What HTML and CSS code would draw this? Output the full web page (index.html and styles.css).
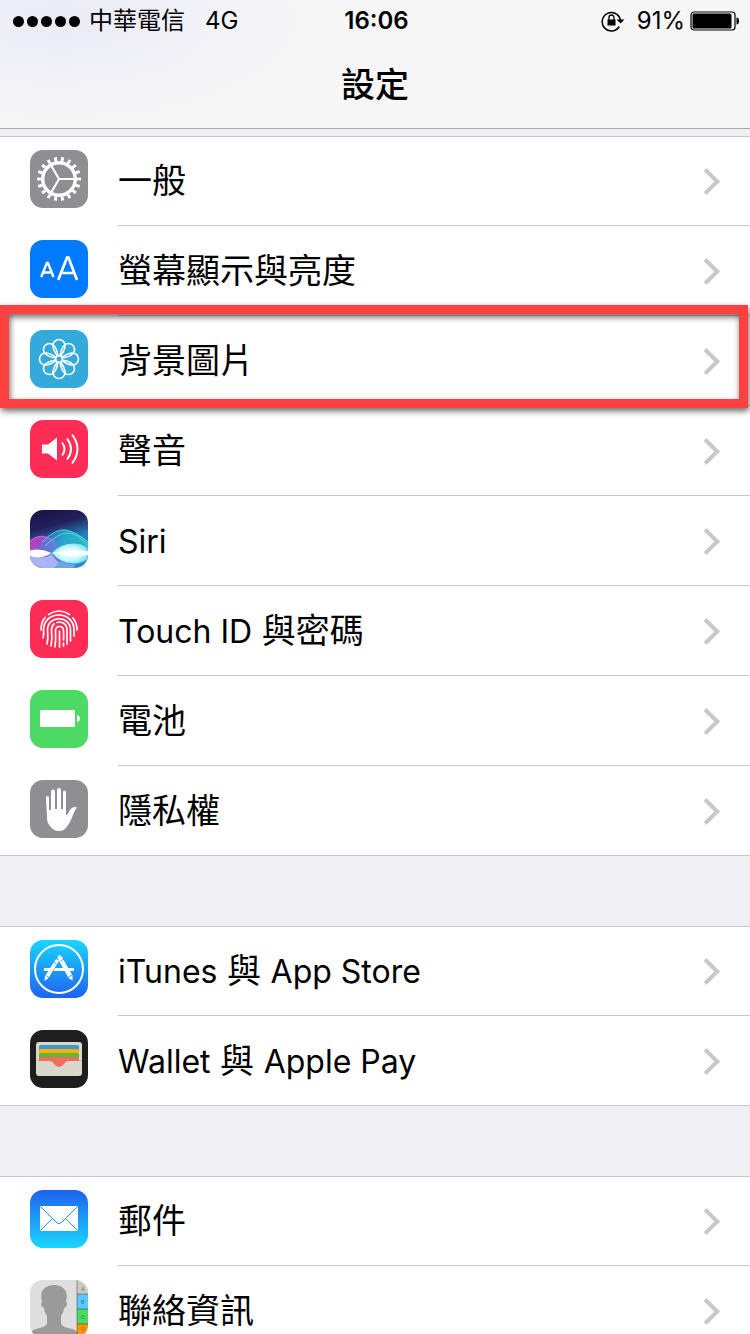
FILE: index.html
```html
<!DOCTYPE html>

<html lang="zh-Hant">
<head>
<meta charset="utf-8"/>
<meta content="width=device-width, initial-scale=1.0" name="viewport"/>
<title>設定</title>
<link rel="stylesheet" href="styles.css">
</head>
<body>
<header>
<div class="status-bar">
<div class="status-left">
<span class="signal"><i></i><i></i><i></i><i></i><i></i></span>
<span class="carrier">中華電信</span>
<span>4G</span>
</div>
<div class="clock">16:06</div>
<div class="status-right">
<svg class="lock" viewBox="0 0 24 22"><path d="M18.300 16.500A9.200 9.200 0 1 1 19.400 10" fill="none" stroke="#000" stroke-width="1.500"/><path d="M15.500 9.500h8l-4 4z"/><path d="M6.500 9.500h8v6h-8z"/><path d="M8 10V7.500a2.500 2.500 0 0 1 5 0V10" fill="none" stroke="#000" stroke-width="1.300"/></svg>
<span class="percent">91%</span>
<svg class="battery" viewBox="0 0 50 20"><rect x="1" y="1" width="44" height="18" rx="3" fill="none" stroke="#000" stroke-width="1.200"/><rect x="2.500" y="2.500" width="39" height="15" rx="1.500"/><path d="M46.500 6.500q2.500 0 2.500 3.500t-2.500 3.500z"/></svg>
</div>
</div>
<h1>設定</h1>
</header>
<main>
<nav class="group">
<a class="row" href="#general">
<svg class="icon" viewBox="0 0 58 58"><rect width="58" height="58" fill="#8e8e93"/><g fill="none" stroke="#fff"><circle cx="29" cy="29" r="16.300" stroke-width="3.400"/><circle cx="29" cy="29" r="19.700" stroke-width="4.600" pathLength="360" stroke-dasharray="8.500 11.500" stroke-dashoffset="4.250"/><path d="M29 29h15M29 29l-7.500-13M29 29l-7.500 13" stroke-width="2.200"/></g></svg>
<span class="label">一般</span>
</a>
<a class="row" href="#display">
<svg class="icon" viewBox="0 0 58 58"><rect width="58" height="58" fill="#007aff"/><g fill="none" stroke="#fff"><path d="M11.200 37l5.700-14h1l5.600 14M13.500 32.500h8" stroke-width="2.400"/><path d="M28.200 40l8.800-22.300h1.500L47 40M31 33h13.500" stroke-width="2.700"/></g></svg>
<span class="label">螢幕顯示與亮度</span>
</a>
<a class="row highlighted" href="#wallpaper">
<svg class="icon" viewBox="0 0 58 58"><rect width="58" height="58" fill="#34aadc"/><g fill="none" stroke="#fff" stroke-width="1.600"><g id="petals"><path id="petal" d="M27.500 26c-3-4-4.500-7.500-4.500-10.500a6 6 0 0 1 12 0c0 3-1.500 6.500-4.500 10.500"/><use href="#petal" transform="rotate(90 29 29)"/><use href="#petal" transform="rotate(180 29 29)"/><use href="#petal" transform="rotate(270 29 29)"/></g><use href="#petals" transform="rotate(45 29 29)"/><circle cx="29" cy="29" r="3.300"/></g></svg>
<span class="label">背景圖片</span>
</a>
<a class="row" href="#sounds">
<svg class="icon" viewBox="0 0 58 58"><rect width="58" height="58" fill="#ff2d55"/><path d="M12 24.500h6l9-7v23l-9-7h-6z" fill="#fff"/><path d="M32 22.500q5 6.500 0 13M37 18.500q8 10.500 0 21M42 14.500q11 14.500 0 29" fill="none" stroke="#fff" stroke-width="2"/></svg>
<span class="label">聲音</span>
</a>
<a class="row" href="#siri">
<svg class="icon" viewBox="0 0 58 58">
<defs>
<linearGradient id="siriBg" x2="0.300" y2="1"><stop offset="0" stop-color="#170f43"/><stop offset=".35" stop-color="#23205c"/><stop offset=".65" stop-color="#287fbd"/><stop offset="1" stop-color="#2f86c8"/></linearGradient>
<linearGradient id="siriPink"><stop offset="0" stop-color="#e935c3"/><stop offset=".5" stop-color="#b04edc"/><stop offset="1" stop-color="#8c9cf0" stop-opacity=".5"/></linearGradient>
<linearGradient id="siriTeal"><stop offset="0" stop-color="#4a65d5" stop-opacity=".5"/><stop offset=".6" stop-color="#2cb9d9"/><stop offset="1" stop-color="#21d7b5"/></linearGradient>
<radialGradient id="siriLens"><stop offset="0" stop-color="#fff"/><stop offset=".6" stop-color="#c8fbff"/><stop offset="1" stop-color="#7fe3fb"/></radialGradient>
</defs>
<rect width="58" height="58" fill="url(#siriBg)"/>
<path d="M0 31Q12 21 25 32T46 58H0z" fill="url(#siriPink)" opacity=".75"/>
<path d="M12 32Q26 18 36 20t22 12v13H0v-5q6-2 12-8z" fill="url(#siriTeal)" opacity=".7"/>
<path d="M0 44q12 7 22 0 4 8 12 11l-6 3H0z" fill="#a9b4f4"/>
<path d="M30 51l-6 7h18l4-3z" fill="#6fa4ea"/>
<path d="M0 31Q12 21 25 32" fill="none" stroke="#f25fd8"/>
<path d="M12 32Q26 18 36 20t22 12M15 36q14-14 24-13t19 13" fill="none" stroke="#4be0e5" stroke-width=".9"/>
<path d="M0 40.500q11-3 21.500 2.500Q11 50 0 46z" fill="#fff"/>
<path d="M21.500 43Q31 33 43 33q10 0 15 5v11q-6 5-15 5-12 0-21.500-11z" fill="url(#siriLens)" stroke="#2a8ccc" stroke-width=".7"/>
<path d="M21.500 43q18-4 36.500-2v4q-18 3-36.500-2z" fill="#fff"/>
</svg>
<span class="label"><span class="latin">Siri</span></span>
</a>
<a class="row" href="#touchid">
<svg class="icon" viewBox="0 0 58 58"><rect width="58" height="58" fill="#ff2d55"/><g fill="none" stroke="#fff" stroke-width="1.700" stroke-linecap="round"><path d="M18.500 14.500q10.500-7 21 0M11 30q0-8 4-12.500M43 18q4 5 4 12M13 38q1-3 .5-8C13.500 10 44 10 44 30v6M17 44q1.500-6 .5-14c0-15 23-15 23 0v11M21 46q1.500-8 .5-16 0-4 2.500-6M27 22.500c5-1.500 10 1.500 10 7.500v14M25 47q1-8 .5-16c0-6 8-6 8 0q.5 6 0 9M33.500 43v3M29.500 31v16"/></g></svg>
<span class="label"><span class="latin">Touch ID</span> 與密碼</span>
</a>
<a class="row" href="#battery">
<svg class="icon" viewBox="0 0 58 58"><rect width="58" height="58" fill="#4cd964"/><rect x="10" y="20" width="35" height="17" rx="1" fill="#fff"/><path d="M47 25q3 1 3 3.500T47 32z" fill="#fff"/></svg>
<span class="label">電池</span>
</a>
<a class="row" href="#privacy">
<svg class="icon" viewBox="0 0 58 58"><rect width="58" height="58" fill="#8e8e93"/><path d="M16 18q0-2 1.500-2t1.500 2v12h2V11.500q0-2 2-2t2 2V29h2V10q0-2 2-2t2 2v19h2V12.500q0-2 1.500-2t1.500 2V35h1l3-5q2.500-4 7-2.500-2 2-3.500 6-3 9-6.500 13-3 4.500-8 4.500-6 0-9-5-3.500-4-3-10z" fill="#fff"/></svg>
<span class="label">隱私權</span>
</a>
</nav>
<nav class="group">
<a class="row" href="#store">
<svg class="icon" viewBox="0 0 58 58"><defs><linearGradient id="storeBg" x2="0" y2="1"><stop offset="0" stop-color="#1bd6fd"/><stop offset="1" stop-color="#1e62f0"/></linearGradient></defs><rect width="58" height="58" fill="url(#storeBg)"/><circle cx="29" cy="29" r="24" fill="none" stroke="#fff" stroke-width="2"/><path d="M14 28h8l-1.500 3H14zM25 28h9l1.500 3H23.500zM38 28h6v3h-4.500z" fill="#fff"/><path d="M26 19l3 1.800L18.500 38 14.500 41l.5-5zM28 16q2-2 4 1l10.500 18.500v5l-4-2.500L27.500 18z" fill="#fff"/><path d="M23.500 22l3.200 2M30.500 21l3.500-2M15.500 35.500l3.500 2M38 37.500l4-2.300" stroke="#218ff6" stroke-width=".8"/></svg>
<span class="label"><span class="latin">iTunes</span> 與 <span class="latin">App Store</span></span>
</a>
<a class="row" href="#wallet">
<svg class="icon" viewBox="0 0 58 58"><rect width="58" height="58" fill="#1e1e1e"/><rect x="6" y="12" width="46" height="34" rx="3" fill="#dad7cc"/><path d="M9 31V17q0-2 2-2h36q2 0 2 2v14z" fill="#3d99cb"/><path d="M9 31V21q0-2 2-2h36q2 0 2 2v10z" fill="#ffae03"/><path d="M9 31v-6q0-2 2-2h36q2 0 2 2v6z" fill="#5aba3c"/><path d="M9 31v-2q0-2 2-2h36q2 0 2 2v2H38q-2 0-4 3-5 6-10 0-2-3-4-3z" fill="#f36d5f"/><path d="M6 30.500h3M49 30.500h3" stroke="#bbb8ae" stroke-width=".7"/></svg>
<span class="label"><span class="latin">Wallet</span> 與 <span class="latin">Apple Pay</span></span>
</a>
</nav>
<nav class="group">
<a class="row" href="#mail">
<svg class="icon" viewBox="0 0 58 58"><defs><linearGradient id="mailBg" x2="0" y2="1"><stop offset="0" stop-color="#1e62f0"/><stop offset="1" stop-color="#1bd6fd"/></linearGradient></defs><rect width="58" height="58" fill="url(#mailBg)"/><rect x="10" y="16" width="38" height="25" rx="1" fill="#fff"/><path d="M10.500 16.500L25 31q4 5 8 0l14.500-14.500M10.500 40.500L22 29M47.500 40.500L36 29" fill="none" stroke="#2490f5" stroke-width="1"/></svg>
<span class="label">郵件</span>
</a>
<a class="row" href="#contacts">
<svg class="icon" viewBox="0 0 58 58"><rect width="58" height="58" fill="#dedede"/><path d="M0 53q3-4 10-5 7-2 7-5v-7q-3-4-3-8-3-1-3-5l1-1q-2-9 1-12 4-5 11-5t11 5q3 3 1 12l1 1q0 4-3 5 0 4-3 8v7q0 3 7 5 7 1 9 4v6H0z" fill="#9a9a9a"/><path d="M47 0h11v14H47z" fill="#cbcac5"/><path d="M47 14h11v15H47z" fill="#5ac8fa"/><path d="M47 29h11v15H47z" fill="#4cd964"/><path d="M47 44h11v14H47z" fill="#ff9500"/><path d="M47 0v58M47 14h11M47 29h11M47 44h11" fill="none" stroke="#000" stroke-opacity=".35"/><g class="tab-letters"><text x="51" y="11">A</text><text x="51" y="24">B</text><text x="51" y="39">C</text><text x="51" y="51">D</text></g></svg>
<span class="label">聯絡資訊</span>
</a>
</nav>
</main>
</body>
</html>
```
FILE: styles.css
```css
* {
  box-sizing: border-box;
}
body {
  margin: 0;
  height: 100vh;
  overflow: hidden;
  background: #efeff4;
  color: #000;
  font-family: Inter, "Noto Sans CJK TC", sans-serif;
}
header {
  height: 129px;
  padding-top: 1px;
  background: radial-gradient(ellipse 240px 100px at 60px 20px, #ebebf8, transparent), #f6f6f7;
  border-bottom: 1px solid #a7a7ac;
}
.status-bar {
  display: grid;
  grid-template-columns: 1fr auto 1fr;
  align-items: center;
  height: 40px;
  padding: 0 10px 0 13px;
  font-size: 24px;
  line-height: 40px;
}
.status-left,
.status-right {
  display: flex;
  align-items: center;
}
.status-right {
  justify-content: flex-end;
}
.signal {
  display: flex;
  gap: 3px;
  margin-right: 9px;
}
.signal i {
  width: 11px;
  height: 11px;
  border-radius: 50%;
  background: #000;
}
.carrier {
  margin-right: 20px;
}
.clock {
  font-weight: 600;
}
.lock {
  width: 24px;
  height: 22px;
  margin-right: 12px;
}
.battery {
  width: 50px;
  height: 20px;
  margin-left: 5px;
}
h1 {
  margin: 20px 0 0;
  font-size: 34px;
  font-weight: 500;
  line-height: 48px;
  text-align: center;
}
main {
  padding-top: 7px;
}
.group {
  margin-bottom: 70px;
  background: #fff;
  box-shadow: inset 0 1px #c8c7cc, inset 0 -1px #c8c7cc;
}
.row {
  position: relative;
  display: flex;
  align-items: center;
  height: 90px;
  padding: 0 30px;
  color: inherit;
  text-decoration: none;
}
.icon {
  flex: none;
  width: 58px;
  height: 58px;
  margin: 0 30px 4px 0;
  border-radius: 13px;
}
.label {
  flex: 1;
  font-size: 34px;
  line-height: 48px;
}
.latin {
  font-size: 32px;
}
/* chevron */
.row::after {
  content: "";
  box-sizing: border-box;
  width: 19px;
  height: 19px;
  margin-right: 4px;
  border: solid #c7c7cc;
  border-width: 4px 4px 0 0;
  transform: rotate(45deg);
}
/* separator */
.row:not(:last-child)::before {
  content: "";
  position: absolute;
  left: 118px;
  right: 0;
  bottom: 0;
  height: 1px;
  background: #c8c7cc;
}
.highlighted .label::after {
  content: "";
  position: absolute;
  z-index: 1;
  top: -11px;
  right: 2px;
  bottom: -2px;
  left: 0;
  border: 9px solid #fd4141;
  filter: drop-shadow(1px 3px 3px rgba(0, 0, 0, 0.6));
}
.tab-letters {
  fill: #0006;
  font-size: 5px;
  font-weight: 600;
}
```
